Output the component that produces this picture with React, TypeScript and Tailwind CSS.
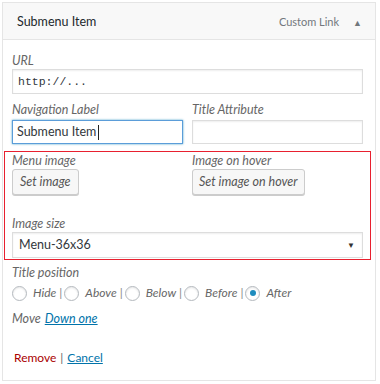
const font = { fontFamily: 'Lato, "Open Sans", sans-serif' };

function Radio({ checked }: { checked?: boolean }) {
  return (
    <span className="inline-flex h-[15px] w-[15px] shrink-0 items-center justify-center rounded-full border border-[#b4b9be] bg-white shadow-[inset_0_1px_2px_rgba(0,0,0,0.1)]">
      {checked && <span className="h-[6px] w-[6px] rounded-full bg-[#1e8cbe]" />}
    </span>
  );
}

const positions = ["Hide", "Above", "Below", "Before", "After"];

export default function App() {
  return (
    <div className="min-h-screen bg-white pl-[2px] pt-[2px]" style={font}>
      <div className="w-[374px] border border-[#e5e5e5] bg-white">
        {/* header */}
        <div className="flex h-[37px] items-center justify-between border-b border-[#e5e5e5] bg-[#f8f8f8] pl-[14px] pr-[13px] pt-[3px]">
          <span className="text-[12.5px] text-[#23282d]">Submenu Item</span>
          <div className="flex items-center gap-[14px]">
            <span className="text-[11px] text-[#72777c]">Custom Link</span>
            <span className="text-[9px] text-[#72777c]">▲</span>
          </div>
        </div>

        {/* body */}
        <div className="pl-[9px] pr-[12px] pt-[12px] pb-[14px] text-[12.5px] text-[#666]">
          <div className="h-[17px] italic leading-[17px]">URL</div>
          <div className="flex h-[25px] w-[351px] items-center border border-[#ddd] bg-white px-[5px] text-[11.5px] text-[#32373c] shadow-[inset_0_1px_2px_rgba(0,0,0,0.07)]" style={{ fontFamily: '"Liberation Mono", monospace' }}>
            http://...
          </div>

          <div className="mt-[6px] flex">
            <div className="w-[180px]">
              <div className="h-[20px] italic leading-[20px]">Navigation Label</div>
              <div className="flex h-[24px] w-[171px] items-center border border-[#5b9dd9] bg-white px-[4px] text-[12.5px] text-[#32373c] shadow-[0_0_2px_rgba(30,140,190,0.8)]">
                Submenu Item<span className="ml-[2px] h-[15px] w-px bg-[#222]" />
              </div>
            </div>
            <div className="w-[171px]">
              <div className="h-[20px] italic leading-[20px]">Title Attribute</div>
              <div className="h-[24px] w-[171px] border border-[#ddd] bg-white shadow-[inset_0_1px_2px_rgba(0,0,0,0.07)]" />
            </div>
          </div>

          {/* highlighted block */}
          <div className="ml-[-8px] mt-[7px] w-[367px] border border-[#e8202f] pb-[1px] pl-[7px]">
            <div className="flex">
              <div className="w-[180px]">
                <div className="h-[17px] italic leading-[17px]">Menu image</div>
                <button className="h-[26px] rounded-[3px] border border-[#ccc] bg-[#f7f7f7] px-[7px] text-[12.5px] italic text-[#555] shadow-[0_1px_0_#ccc]">
                  Set image
                </button>
              </div>
              <div>
                <div className="h-[17px] italic leading-[17px]">Image on hover</div>
                <button className="h-[26px] rounded-[3px] border border-[#ccc] bg-[#f7f7f7] px-[6px] text-[12.5px] italic text-[#555] shadow-[0_1px_0_#ccc]">
                  Set image on hover
                </button>
              </div>
            </div>
            <div className="mt-[20px] h-[17px] italic leading-[17px]">Image size</div>
            <div className="flex h-[26px] w-[351px] items-center justify-between border border-[#ddd] bg-white pl-[6px] pr-[7px] text-[12.5px] text-[#32373c] shadow-[inset_0_1px_2px_rgba(0,0,0,0.07)]">
              <span>Menu-36x36</span>
              <span className="text-[8px] text-[#333]">▼</span>
            </div>
          </div>

          <div className="mt-[4px] h-[17px] italic leading-[17px]">Title position</div>
          <div className="mt-[1px] flex h-[22px] items-center text-[12px] italic">
            {positions.map((p, i) => (
              <div key={p} className="flex items-center">
                <Radio checked={p === "After"} />
                <span className="ml-[6px]">{p}</span>
                {i < positions.length - 1 && <span className="ml-[3px] mr-[2px] not-italic text-[#888]">|</span>}
              </div>
            ))}
          </div>

          <div className="mt-[7px] flex h-[16px] items-center italic leading-[16px]">
            <span>Move</span>
            <span className="ml-[4px] text-[#0073aa] underline">Down one</span>
          </div>

          <div className="ml-[2px] mt-[23px] flex h-[16px] items-center text-[12px] leading-[16px]">
            <span className="text-[#a00]">Remove</span>
            <span className="mx-[4px] text-[#666]">|</span>
            <span className="text-[#0073aa] underline">Cancel</span>
          </div>
        </div>
      </div>
    </div>
  );
}
